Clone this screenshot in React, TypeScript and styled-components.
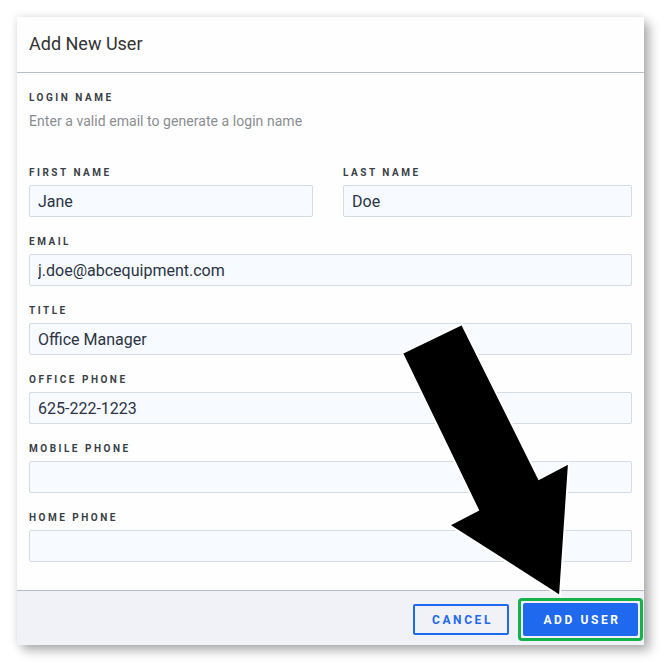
import React from "react";
import styled, { createGlobalStyle } from "styled-components";

const GlobalStyle = createGlobalStyle`
    html, body {
        margin: 0;
        padding: 0;
        background: #ffffff;
        font-family: Roboto, "Liberation Sans", Arial, sans-serif;
    }
    * {
        box-sizing: border-box;
    }
`;

const fields = [
    { label: "Email", value: "j.doe@abcequipment.com" },
    { label: "Title", value: "Office Manager" },
    { label: "Office Phone", value: "625-222-1223" },
    { label: "Mobile Phone", value: "" },
    { label: "Home Phone", value: "" },
];

const App = () => {
    return (
        <>
            <GlobalStyle />
            <Page>
                <Dialog>
                    <Header>
                        <Title>Add New User</Title>
                    </Header>

                    <Body>
                        <LoginBlock>
                            <Label>Login Name</Label>
                            <Hint>Enter a valid email to generate a login name</Hint>
                        </LoginBlock>

                        <Row>
                            <Field>
                                <Label>First Name</Label>
                                <Input defaultValue="Jane" />
                            </Field>
                            <Field>
                                <Label>Last Name</Label>
                                <Input defaultValue="Doe" />
                            </Field>
                        </Row>

                        {fields.map((f) => (
                            <Field key={f.label}>
                                <Label>{f.label}</Label>
                                <Input defaultValue={f.value} />
                            </Field>
                        ))}
                    </Body>

                    <Footer>
                        <CancelButton>Cancel</CancelButton>
                        <Highlight>
                            <PrimaryButton>Add User</PrimaryButton>
                        </Highlight>
                    </Footer>
                </Dialog>

                {/* annotation arrow drawn over the dialog */}
                <Arrow width="670" height="671" viewBox="0 0 670 671">
                    <polygon
                        points="402,353 462,324 539,479 569,463 560,596 449,525 478,510"
                        fill="#000"
                        stroke="#fff"
                        strokeWidth="2"
                        strokeLinejoin="miter"
                    />
                </Arrow>
            </Page>
        </>
    );
};

const Page = styled.div`
    position: relative;
    width: 670px;
    height: 671px;
    padding: 17px 0 0 17px;
`;

const Dialog = styled.div`
    width: 627px;
    height: 628px;
    background: #fefefe;
    display: flex;
    flex-direction: column;
    box-shadow: 0 0 8px rgba(0, 0, 0, 0.12), 6px 6px 10px rgba(0, 0, 0, 0.28);
`;

const Header = styled.div`
    height: 56px;
    padding: 0 12px;
    display: flex;
    align-items: center;
    border-bottom: 1px solid #b5bec8;
`;

const Title = styled.h2`
    margin: 0;
    font-size: 18px;
    font-weight: 400;
    color: #333;
    padding-bottom: 3px;
`;

const Body = styled.div`
    flex: 1;
    padding: 18px 12px 0 12px;
    display: flex;
    flex-direction: column;
    gap: 18px;
`;

const LoginBlock = styled.div`
    display: flex;
    flex-direction: column;
    gap: 8px;
    margin-bottom: 18px;
`;

const Label = styled.div`
    font-size: 10px;
    line-height: 12px;
    padding-top: 1px;
    font-weight: 700;
    letter-spacing: 2.5px;
    text-transform: uppercase;
    color: #3a3e47;
`;

const Hint = styled.div`
    font-size: 14px;
    line-height: 18px;
    letter-spacing: 0.05px;
    color: #8a8d92;
`;

const Row = styled.div`
    display: grid;
    grid-template-columns: 284px 289px;
    column-gap: 30px;
`;

const Field = styled.div`
    display: flex;
    flex-direction: column;
    gap: 6px;
`;

const Input = styled.input`
    height: 32px;
    width: 100%;
    padding: 1px 8px 0 8px;
    background: #f7faff;
    border: 1px solid #d3dbe6;
    border-radius: 2px;
    font-family: Roboto, "Liberation Sans", Arial, sans-serif;
    font-size: 16px;
    color: #2c3444;
    outline: none;
`;

const Footer = styled.div`
    height: 55px;
    background: #f0f2f7;
    border-top: 1px solid #b5bec8;
    display: flex;
    align-items: center;
    justify-content: flex-end;
    gap: 9px;
    padding: 3px 1px 0 0;
`;

const ButtonBase = styled.button`
    font-family: Roboto, "Liberation Sans", Arial, sans-serif;
    font-size: 12px;
    font-weight: 700;
    letter-spacing: 2.6px;
    text-transform: uppercase;
    cursor: pointer;
    border-radius: 2px;
`;

const CancelButton = styled(ButtonBase)`
    width: 96px;
    height: 31px;
    background: transparent;
    color: #1f69ef;
    border: 2px solid #1f69ef;
    padding: 0 0 0 3px;
`;

const Highlight = styled.div`
    padding: 2px;
    border: 3px solid #14b24b;
    border-radius: 4px;
    display: flex;
`;

const PrimaryButton = styled(ButtonBase)`
    width: 115px;
    height: 33px;
    background: #1f69ef;
    color: #ffffff;
    border: none;
    padding: 0 0 0 3px;
`;

const Arrow = styled.svg`
    position: absolute;
    top: 0;
    left: 0;
    pointer-events: none;
`;

export default App;
